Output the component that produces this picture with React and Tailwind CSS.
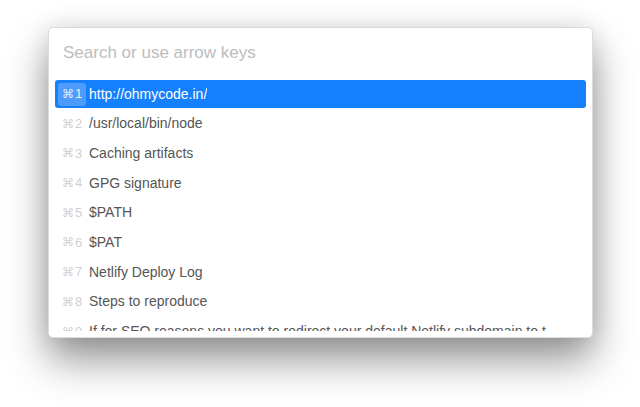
import React from 'react';

const items = [
  'http://ohmycode.in/',
  '/usr/local/bin/node',
  'Caching artifacts',
  'GPG signature',
  '$PATH',
  '$PAT',
  'Netlify Deploy Log',
  'Steps to reproduce',
  'If for SEO reasons you want to redirect your default Netlify subdomain to t',
];

function Row({ index, text, active }) {
  return (
    <div
      className={
        'flex items-center h-[28px] mb-[1.7px] rounded-[3px] ' +
        (active ? 'bg-[#1580fb] text-white' : 'text-[#555555]')
      }
    >
      <div
        className={
          'ml-[3px] w-[28px] h-[23px] flex items-center justify-center rounded-[3px] ' +
          (active ? 'bg-[#4d9bfa] text-[#e6f0ff]' : 'text-[#d0d0d0]')
        }
        style={{ fontFamily: '"DejaVu Sans", sans-serif' }}
      >
        <span className="text-[12px]">⌘</span>
        <span className="text-[13px] ml-[1px]" style={{ fontFamily: '"Liberation Sans", Arial, sans-serif' }}>
          {index}
        </span>
      </div>
      <div className="ml-[3px] text-[14px] whitespace-nowrap overflow-hidden">{text}</div>
    </div>
  );
}

export default function App() {
  return (
    <div className="w-[640px] h-[407px] bg-white overflow-hidden pt-[27px] pl-[48px]" style={{ fontFamily: '"Liberation Sans", Arial, sans-serif' }}>
      <div className="w-[545px] h-[311px] bg-white border border-[#dcdcdc] rounded-[5px] shadow-[0_0_24px_rgba(0,0,0,0.10),0_22px_40px_rgba(0,0,0,0.42)] flex flex-col overflow-hidden">
        <div className="h-[51px] flex items-center pl-[14px] pb-[2px] text-[17px] text-[#bdbdbd] shrink-0">
          Search or use arrow keys
        </div>
        <div className="mx-[6px] mt-[1px] h-[251px] overflow-hidden">
          {items.map((t, i) => (
            <Row key={i} index={i + 1} text={t} active={i === 0} />
          ))}
        </div>
      </div>
    </div>
  );
}
